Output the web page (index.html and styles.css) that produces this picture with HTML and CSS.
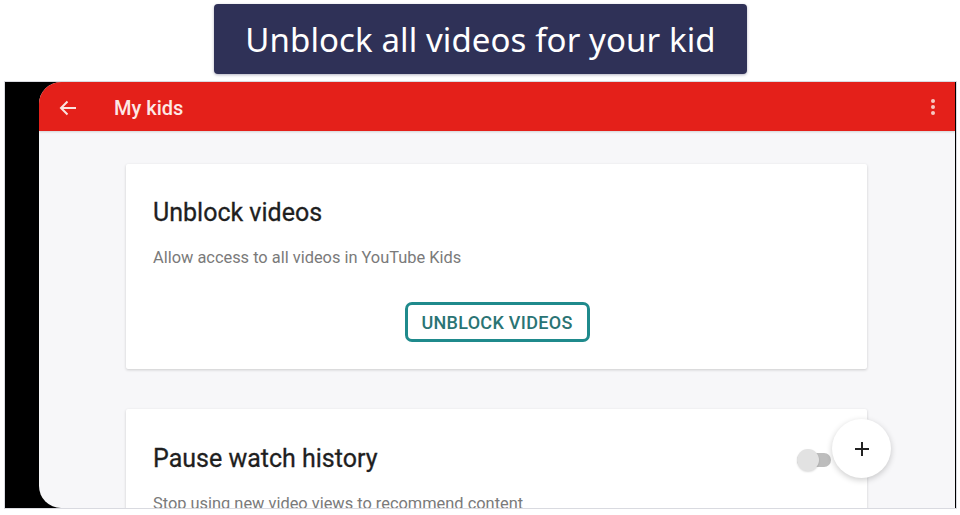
FILE: index.html
```html
<!DOCTYPE html>
<html>
<head>
<meta charset="utf-8">
<link rel="stylesheet" href="styles.css">
</head>
<body>
<div class="caption-row">
  <div class="caption">Unblock all videos for your kid</div>
</div>
<div class="frame">
  <div class="screen">
    <div class="appbar">
      <svg class="back" width="18" height="16" viewBox="0 0 18 16"><path d="M17 8H2M8.5 1.5L2 8l6.5 6.5" fill="none" stroke="#fbe3e0" stroke-width="2"/></svg>
      <div class="apptitle">My kids</div>
      <div class="dots"><span></span><span></span><span></span></div>
    </div>
    <div class="content">
      <div class="card">
        <div class="card-title">Unblock videos</div>
        <div class="card-sub">Allow access to all videos in YouTube Kids</div>
        <div class="btn-row"><div class="btn">UNBLOCK VIDEOS</div></div>
      </div>
      <div class="card card2">
        <div class="row2">
          <div class="card-title">Pause watch history</div>
          <div class="toggle"><span class="thumb"></span></div>
        </div>
        <div class="card-sub sub2">Stop using new video views to recommend content</div>
      </div>
    </div>
    <div class="fab"><svg width="16" height="16" viewBox="0 0 16 16"><path d="M8 1v14M1 8h14" stroke="#222" stroke-width="2"/></svg></div>
  </div>
</div>
</body>
</html>
```
FILE: styles.css
```css
* { box-sizing: border-box; }
html, body { margin: 0; padding: 0; background: #ffffff; }
body { width: 960px; height: 515px; overflow: hidden; font-family: Roboto, "Noto Sans", sans-serif; }

.caption-row { display: flex; justify-content: center; padding-top: 4px; padding-left: 1px; }
.caption {
  width: 533px; height: 70px;
  background: #2f3157;
  border-radius: 4px;
  box-shadow: 0 1px 3px rgba(40, 40, 80, 0.35);
  color: #ffffff;
  font-family: "Noto Sans", Lato, sans-serif;
  font-size: 33px;
  font-weight: 400;
  display: flex; align-items: center; justify-content: center;
  letter-spacing: 0.1px;
}

.frame {
  margin: 7px 3px 0 4px;
  height: 428px;
  border: 1px solid #d9dae0;
  background: #000000;
  display: flex;
  padding-left: 34px;
}
.screen {
  flex: 1;
  background: #f7f7f9;
  border-radius: 22px 0 0 22px;
  overflow: hidden;
  position: relative;
  display: flex; flex-direction: column;
  margin-right: 1px;
}
.appbar {
  height: 49px;
  background: #e4201a;
  display: flex; align-items: center;
  padding-left: 20px;
  flex-shrink: 0;
  box-shadow: 0 1px 2px rgba(0,0,0,0.15);
}
.back { margin-top: 2px; }
.apptitle {
  margin-left: 37px;
  color: #fde8e6;
  font-size: 20px;
  font-weight: 500;
  margin-top: 2px;
}
.dots {
  margin-left: auto; margin-right: 20px;
  display: flex; flex-direction: column; gap: 2px;
  margin-top: 1px;
}
.dots span { width: 4px; height: 4px; border-radius: 50%; background: #f7c8c2; }

.content { padding: 33px 88px 0 87px; display: flex; flex-direction: column; gap: 40px; }
.card {
  background: #ffffff;
  height: 205px;
  box-shadow: 0 1px 3px rgba(0,0,0,0.18);
  padding: 35px 26px 0 27px;
  border-radius: 2px;
}
.card-title { font-size: 25px; line-height: 28px; color: #1f1f1f; font-weight: 400; -webkit-text-stroke: 0.3px #1f1f1f; }
.card-sub { margin-top: 21px; font-size: 16.4px; color: #7a7a7a; line-height: 20px; }
.btn-row { display: flex; justify-content: center; margin-top: 34px; }
.btn {
  width: 185px; height: 40px;
  border: 3px solid #1f8a8c;
  border-radius: 7px;
  color: #2a7474;
  font-size: 18px; font-weight: 500;
  letter-spacing: 0.3px;
  display: flex; align-items: center; justify-content: center;
  padding-top: 1px;
}
.card2 { height: 140px; padding-top: 36px; }
.row2 { display: flex; align-items: center; justify-content: space-between; padding-right: 10px; }
.toggle {
  width: 34px; height: 14px; border-radius: 7px; background: #bdbdbd;
  position: relative; margin-top: 2px;
}
.thumb {
  position: absolute; left: 0; top: -4px;
  width: 22px; height: 22px; border-radius: 50%;
  background: #e2e2e2;
  box-shadow: 0 1px 2px rgba(0,0,0,0.15);
}
.sub2 { margin-top: 21px; }
.fab {
  position: absolute; left: 793px; top: 337px;
  width: 59px; height: 59px; border-radius: 50%;
  background: #ffffff;
  box-shadow: 0 2px 6px rgba(0,0,0,0.2);
  display: flex; align-items: center; justify-content: center;
}
```
